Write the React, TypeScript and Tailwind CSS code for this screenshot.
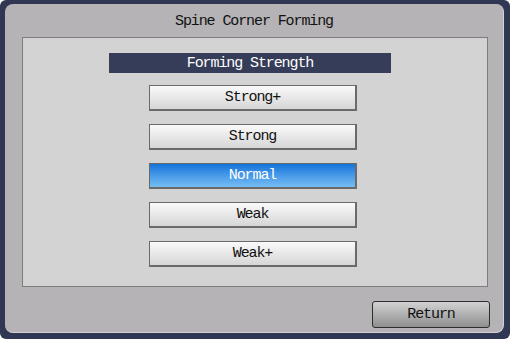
import React from "react";

const font = { fontFamily: '"Liberation Mono", "DejaVu Sans Mono", monospace' };

function Btn({ label, active }: { label: string; active?: boolean }) {
  return (
    <div
      className={
        "w-[208px] h-[26px] flex items-center justify-center pt-[2px] text-[15px] tracking-[-1.1px] border border-r-2 border-b-2 " +
        (active
          ? "border-[#6a6a6a] text-white bg-gradient-to-b from-[#0f74dc] to-[#75bdf2]"
          : "border-[#6a6a6a] text-[#111] bg-gradient-to-b from-[#fafafa] to-[#d6d6d6]")
      }
    >
      {label}
    </div>
  );
}

export default function App() {
  return (
    <div style={font} className="w-[510px] h-[339px] bg-[#2f3752] rounded-[6px] pt-[4px] pl-[5px] pr-[6px] pb-[6px]">
      <div className="w-full h-full bg-[#b5b3b5] rounded-[8px] border-r border-b border-[#d4d2d4] flex flex-col">
        <div className="h-[33px] flex items-center justify-center text-[15px] tracking-[-1.1px] text-[#111] pt-[3px]">
          Spine Corner Forming
        </div>
        <div className="ml-[17px] w-[466px] h-[250px] bg-[#d3d3d3] border border-[#7d7d7d] flex flex-col">
          <div className="mt-[15px] ml-[86px] w-[282px] h-[20px] pt-[2px] bg-[#363d58] text-white text-[15px] tracking-[-1.1px] flex items-center justify-center">
            Forming Strength
          </div>
          <div className="mt-[12px] ml-[126px] flex flex-col gap-[13px]">
            <Btn label="Strong+" />
            <Btn label="Strong" />
            <Btn label="Normal" active />
            <Btn label="Weak" />
            <Btn label="Weak+" />
          </div>
        </div>
        <div className="flex justify-end pr-[13px] mt-[14px]">
          <div className="w-[118px] h-[27px] pt-[2px] rounded-[3px] border border-[#2e2e2e] bg-gradient-to-b from-[#d2d2d2] to-[#8f8f8f] text-[#111] text-[15px] tracking-[-1.1px] flex items-center justify-center">
            Return
          </div>
        </div>
      </div>
    </div>
  );
}
